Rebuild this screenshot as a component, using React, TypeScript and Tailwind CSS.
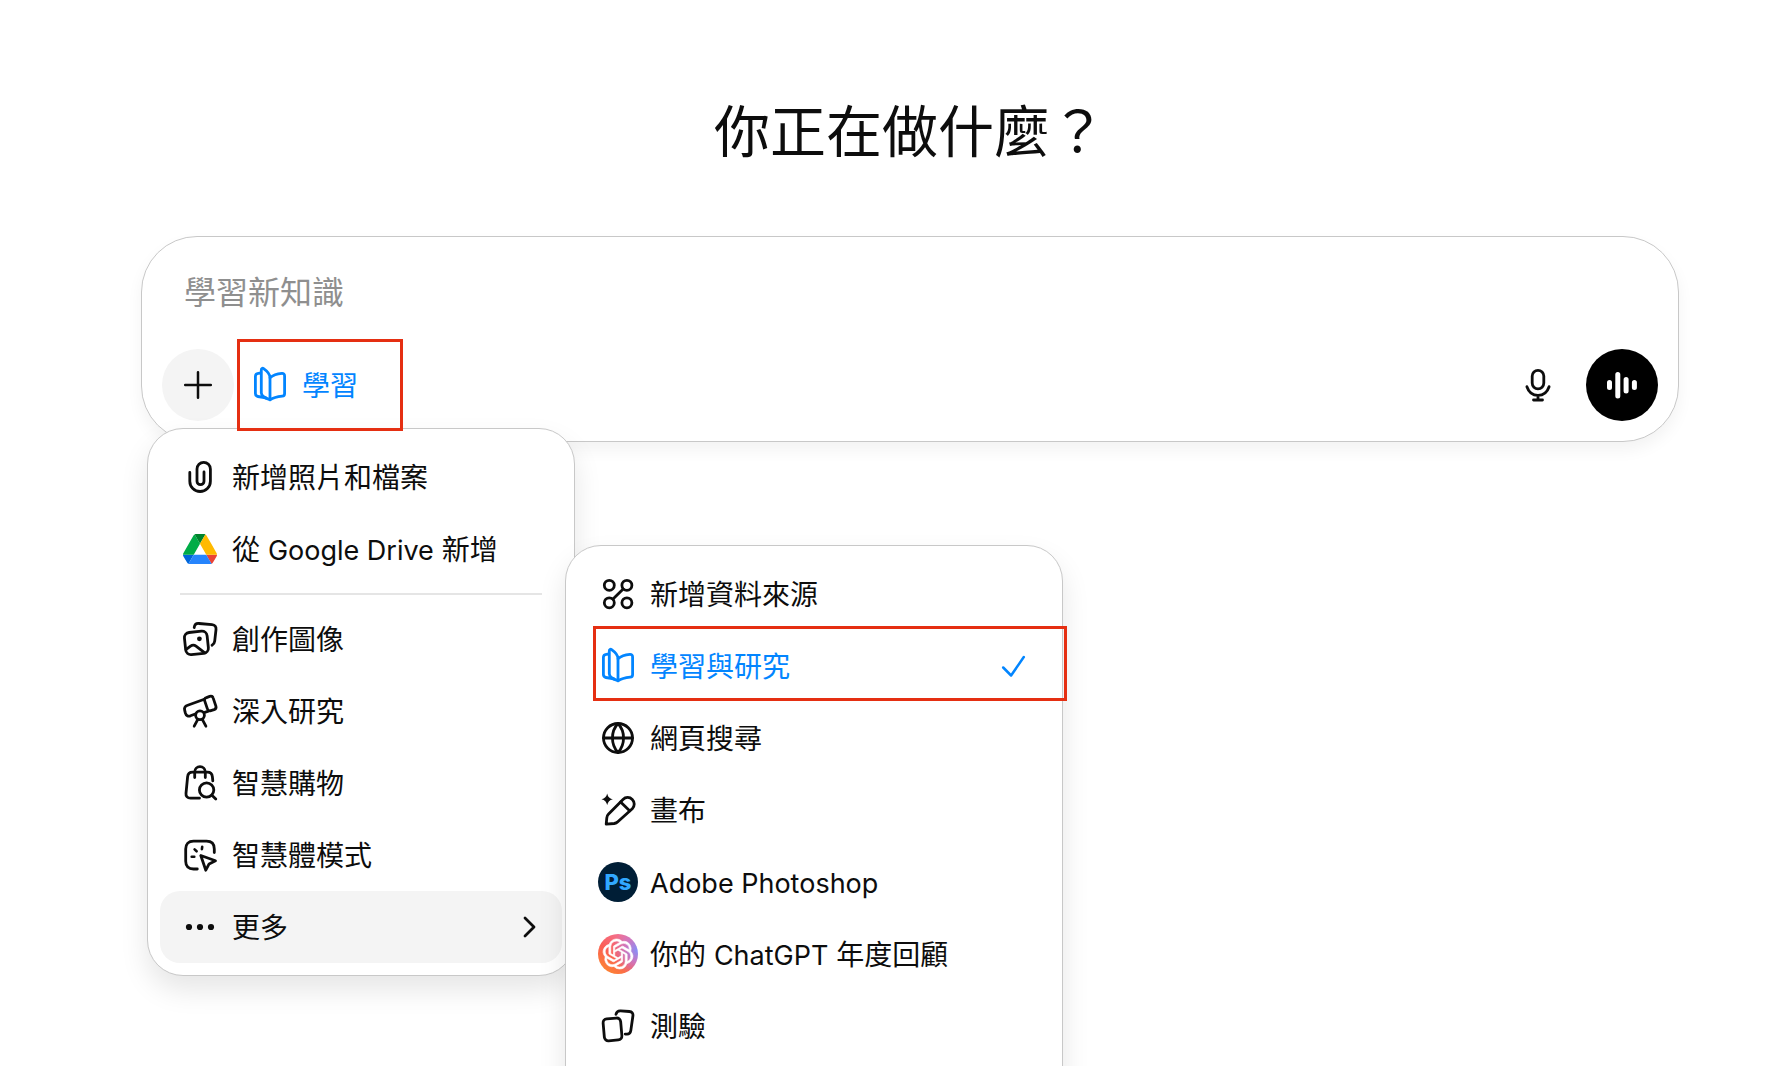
import React, { useState } from 'react';
import { SiOpenai } from 'react-icons/si';

interface IconProps {
  className?: string;
  children: React.ReactNode;
}

// All line icons share a 40px grid and the current text colour
const LineIcon: React.FC<IconProps> = ({ className = 'size-10', children }) => (
  <svg
    className={className}
    viewBox="0 0 40 40"
    fill="none"
    stroke="currentColor"
    strokeWidth="2.8"
    strokeLinecap="round"
    strokeLinejoin="round"
    aria-hidden="true"
  >
    {children}
  </svg>
);

const PlusIcon = () => (
  <LineIcon>
    <path strokeWidth="2.5" d="M20 7.2v25.6M7.2 20h25.6" />
  </LineIcon>
);

const BookIcon = () => (
  <LineIcon>
    <path d="M10.8 8 8.300 8.300c-1.900.2-2.900 1.200-2.900 3v17.300c0 1.600.9 2.600 2.500 2.900l8 1.400" />
    <path d="M20 34.800c-4.600-1.700-8.700-3-8.700-7V4.900c0-1.500 1.200-2.100 2.300-1.300C17 6 20 8.600 20 12.600z" />
    <path d="M20 12.800c3-2.600 6.600-3.900 11.900-4.400 1.700-.1 2.700.8 2.700 2.500v17.500c0 1.700-.8 2.600-2.400 2.800-5 .6-8.500 1.300-12.200 3.600" />
  </LineIcon>
);

const MicIcon = () => (
  <LineIcon>
    <rect x="14.2" y="5.300" width="11.600" height="18.600" rx="5.800" />
    <path d="M8.900 21.700c1.800 5.400 6.100 8.600 11.100 8.600s9.300-3.200 11.100-8.600M20 30.500V35M15.500 35h9" />
  </LineIcon>
);

const VoiceIcon = () => (
  <LineIcon>
    <path strokeWidth="5" d="M7.500 17.500v5M15.800 9.500V31M24.100 14.500v11.500M32.400 17.500v5" />
  </LineIcon>
);

const PaperclipIcon = () => (
  <LineIcon>
    <path d="M9.800 15.500V24.200a10.300 10.300 0 0 0 20.600 0V12a6.700 6.700 0 0 0-13.400 0v12.200a3.500 3.500 0 0 0 7 0V15" />
  </LineIcon>
);

const DriveIcon = () => (
  <svg className="w-[34px]" viewBox="0 0 87.3 78" aria-hidden="true">
    <path fill="#0066da" d="m6.6 66.85 3.85 6.65c.8 1.4 1.95 2.5 3.3 3.3L27.5 53H0c0 1.55.4 3.1 1.2 4.5z" />
    <path fill="#00ac47" d="M43.65 25 29.9 1.2c-1.35.8-2.5 1.9-3.3 3.3l-25.4 44A9.06 9.06 0 0 0 0 53h27.5z" />
    <path fill="#ea4335" d="M73.55 76.8c1.35-.8 2.5-1.9 3.3-3.3l1.6-2.75 7.65-13.25c.8-1.4 1.2-2.95 1.2-4.5H59.798l5.852 11.5z" />
    <path fill="#00832d" d="M43.65 25 57.4 1.2C56.05.4 54.5 0 52.9 0H34.4c-1.6 0-3.15.45-4.5 1.2z" />
    <path fill="#2684fc" d="M59.8 53H27.5L13.75 76.8c1.35.8 2.9 1.2 4.5 1.2h50.8c1.6 0 3.15-.45 4.5-1.2z" />
    <path fill="#ffba00" d="m73.4 26.5-12.7-22c-.8-1.4-1.95-2.5-3.3-3.3L43.65 25l16.15 28h27.45c0-1.55-.4-3.1-1.2-4.5z" />
  </svg>
);

const ImagesIcon = () => (
  <LineIcon>
    <rect x="5" y="12.8" width="22.8" height="22.2" rx="5.2" transform="rotate(-6 16.4 23.9)" />
    <circle cx="19.4" cy="19.8" r="2.4" fill="currentColor" stroke="none" />
    <path d="M6.2 30.300l4.300-3.200c1.800-1.300 3.800-1.300 5.500 0l8.800 6.700" />
    <path d="M14.2 8.500c.4-2.800 2-4.300 4.800-4l13 1.200c2.900.3 4.300 2.100 4 4.900l-1.300 11.500c-.2 1.900-1.100 3.300-2.700 4.100" />
  </LineIcon>
);

const TelescopeIcon = () => (
  <LineIcon>
    <path d="M24.300 8.300 7.700 14.200c-2.600.9-3.700 2.700-3 5.200l.7 2.800c.7 2.500 2.600 3.400 5.100 2.600l5.400-2" />
    <path d="M24.800 21.300l3.600-1.100" />
    <path d="m26.500 6.600 3.200-1.200c1.700-.6 3 0 3.500 1.700l2.700 8c.5 1.700-.1 2.900-1.800 3.500l-3.200 1c-1.700.6-2.900 0-3.500-1.700l-2.700-8c-.6-1.600 0-2.700 1.800-3.300z" />
    <circle cx="20" cy="24.300" r="4.400" />
    <path d="m17.700 28.600-3.500 6.600M22.400 28.600l3.500 6.600" />
  </LineIcon>
);

const ShoppingIcon = () => (
  <LineIcon>
    <path d="M19.500 35.200h-9c-3 0-4.800-1.900-4.500-4.900l1.600-16.500c.3-3 2-4.700 5-4.700h14.800c3 0 4.700 1.700 5 4.700l.4 4" />
    <path d="M14.700 14.500V9a5.300 5.300 0 0 1 10.600 0v5.500" />
    <circle cx="26.600" cy="27" r="7.200" />
    <path d="m31.900 32.200 3.900 3.900" />
  </LineIcon>
);

const AgentIcon = () => (
  <LineIcon>
    <path d="M17.300 34H13.500c-5 0-7.800-2.800-7.800-7.800V14c0-5 2.800-7.800 7.800-7.800h13c5 0 7.800 2.800 7.800 7.800v3.500" />
    <path d="m20.800 20.500 14.700 5.200-6.400 3.200-3.300 6.300z" />
    <path strokeWidth="2.600" d="m22.200 11.800-.3 2.400M14.600 14.400l2 1.900M11.700 21.700h2.600" />
  </LineIcon>
);

const MoreIcon = () => (
  <LineIcon>
    <g fill="currentColor" stroke="none">
      <circle cx="9" cy="20" r="3.100" />
      <circle cx="20" cy="20" r="3.100" />
      <circle cx="31" cy="20" r="3.100" />
    </g>
  </LineIcon>
);

const SourcesIcon = () => (
  <LineIcon>
    <circle cx="11.300" cy="11.300" r="5" />
    <circle cx="28.900" cy="11.300" r="5" />
    <circle cx="11.300" cy="28.800" r="5" />
    <circle cx="28.900" cy="28.800" r="5" />
    <path d="M15 25.100 25.200 15" />
  </LineIcon>
);

const GlobeIcon = () => (
  <LineIcon>
    <circle cx="20" cy="20" r="14.500" />
    <path d="M5.500 20h29M20 5.500c-7.400 8-7.400 21 0 29M20 5.500c7.400 8 7.400 21 0 29" />
  </LineIcon>
);

const CanvasIcon = () => (
  <LineIcon>
    <path
      fill="currentColor"
      stroke="none"
      d="M9.200 3.400c.8 3.500 2.200 4.900 5.700 5.800-3.500 1-4.900 2.500-5.700 5.800-.8-3.300-2.300-4.800-5.700-5.800 3.400-1 4.900-2.400 5.700-5.800z"
    />
    <path d="m8.200 34.100.6-6.300c.1-1.500.7-2.700 1.800-3.800L25 9.400a6.500 6.500 0 0 1 9.300 9.300L19.800 31.800c-1 1-2.200 1.500-3.600 1.700z" />
    <path d="m22.600 11.900 9 8.800" />
  </LineIcon>
);

const QuizIcon = () => (
  <LineIcon>
    <rect x="5.700" y="12.400" width="17.600" height="22" rx="4" transform="rotate(-5 14.500 23.400)" />
    <path d="M18 8.300c.6-2.600 2-3.700 4.600-3.500l8.700.7c2.700.2 4 1.800 3.600 4.500l-2.100 14.600c-.4 2.500-1.600 3.600-4 3.500h-1.600" />
  </LineIcon>
);

const PhotoshopIcon = () => (
  <span
    className="flex size-10 items-center justify-center rounded-full bg-[#001e36] font-['Inter'] text-[22px] leading-none font-extrabold text-[#31a8ff]"
    aria-hidden="true"
  >
    Ps
  </span>
);

const ReviewIcon = () => (
  <span className="flex size-10 items-center justify-center rounded-full bg-[radial-gradient(circle_at_100%_40%,#8390fa_0%,#c678cdcc_28%,transparent_55%),linear-gradient(35deg,#fd8a2c_5%,#fb5f55_45%,#f3708f_80%)] text-white">
    <SiOpenai className="size-[30px] overflow-visible" stroke="currentColor" strokeWidth="0.5" aria-hidden="true" />
  </span>
);

const CheckIcon = () => (
  <svg className="size-8" viewBox="0 0 32 32" fill="none" stroke="currentColor" strokeWidth="2.5" strokeLinecap="round" strokeLinejoin="round" aria-hidden="true">
    <path d="m5.200 17.500 7.900 8L25.800 7" />
  </svg>
);

const ChevronIcon = () => (
  <svg className="size-7" viewBox="0 0 28 28" fill="none" stroke="currentColor" strokeWidth="2.8" strokeLinecap="round" strokeLinejoin="round" aria-hidden="true">
    <path d="m11 5 9 9-9 9" />
  </svg>
);

interface MenuItemProps {
  icon: React.ReactNode;
  label: React.ReactNode;
  className?: string;
  trailing?: React.ReactNode;
  onClick?: () => void;
}

const MenuItem: React.FC<MenuItemProps> = ({ icon, label, className = '', trailing, onClick }) => (
  <button
    type="button"
    role="menuitem"
    onClick={onClick}
    className={`relative flex h-[72px] w-full items-center gap-3 rounded-[20px] px-5 text-left ${className}`}
  >
    <span className="flex size-10 shrink-0 items-center justify-center">{icon}</span>
    <span className="flex-1 pt-0.5 whitespace-nowrap">{label}</span>
    {trailing}
  </button>
);

// Latin names run a touch smaller so they sit evenly beside the Han characters
const Latin: React.FC<{ children: React.ReactNode }> = ({ children }) => (
  <span className="text-[27px]">{children}</span>
);

const menuClass =
  'absolute rounded-[36px] border border-[#c8c8c8] bg-white p-3 text-[28px] leading-10 shadow-[0_14px_28px_rgba(0,0,0,0.10)]';

export default function App() {
  const [prompt, setPrompt] = useState('');
  const [moreOpen, setMoreOpen] = useState(true);

  return (
    <main className="h-screen overflow-hidden bg-white pt-24 pr-[103px] pl-[141px] font-['Inter','Noto_Sans_CJK_TC',sans-serif] text-[#0d0d0d]">
      <h1 className="text-center text-[56px] leading-[72px]">你正在做什麼？</h1>

      <div className="relative mt-[68px]">
        <form
          onSubmit={(e) => e.preventDefault()}
          className="flex flex-col gap-5 rounded-[56px] border border-[#c8c8c8] bg-white p-5 shadow-[0_8px_16px_rgba(0,0,0,0.05)]"
        >
          <input
            type="text"
            value={prompt}
            onChange={(e) => setPrompt(e.target.value)}
            placeholder="學習新知識"
            aria-label="學習新知識"
            className="h-[72px] w-full px-[22px] pb-0.5 text-[32px] outline-none placeholder:text-[#8f8f8f]"
          />
          <div className="flex items-center">
            <button type="button" aria-label="新增" className="flex size-[72px] items-center justify-center rounded-full bg-[#f4f4f4]">
              <PlusIcon />
            </button>
            <button type="button" className="relative flex h-[72px] items-center gap-3 px-4 text-[28px] text-[#0285ff]">
              <BookIcon />
              <span className="pt-0.5">學習</span>
              <span className="absolute -top-[10px] left-[3px] z-10 h-[92px] w-[166px] border-3 border-[#e52f12]" />
            </button>
            <button type="button" aria-label="聽寫" className="ml-auto flex size-[72px] items-center justify-center rounded-full">
              <MicIcon />
            </button>
            <button type="button" aria-label="語音" className="ml-3 flex size-[72px] items-center justify-center rounded-full bg-black text-white">
              <VoiceIcon />
            </button>
          </div>
        </form>

        <div role="menu" className={`${menuClass} top-[192px] left-[6px] w-[428px]`}>
          <MenuItem icon={<PaperclipIcon />} label="新增照片和檔案" />
          <MenuItem icon={<DriveIcon />} label={<>從 <Latin>Google Drive</Latin> 新增</>} />
          <hr className="mx-5 my-2 border-t-2 border-[#e5e5e5]" />
          <MenuItem icon={<ImagesIcon />} label="創作圖像" />
          <MenuItem icon={<TelescopeIcon />} label="深入研究" />
          <MenuItem icon={<ShoppingIcon />} label="智慧購物" />
          <MenuItem icon={<AgentIcon />} label="智慧體模式" />
          <MenuItem
            icon={<MoreIcon />}
            label="更多"
            className="bg-[#f4f4f4]"
            trailing={<ChevronIcon />}
            onClick={() => setMoreOpen(!moreOpen)}
          />
        </div>

        {moreOpen && (
          <div role="menu" className={`${menuClass} top-[309px] left-[424px] w-[498px] pb-20`}>
            <MenuItem icon={<SourcesIcon />} label="新增資料來源" />
            <MenuItem
              icon={<BookIcon />}
              label="學習與研究"
              className="text-[#0285ff]"
              trailing={
                <>
                  <CheckIcon />
                  <span className="absolute -top-1 -right-[17px] left-[15px] h-[75px] border-3 border-[#e52f12]" />
                </>
              }
            />
            <MenuItem icon={<GlobeIcon />} label="網頁搜尋" />
            <MenuItem icon={<CanvasIcon />} label="畫布" />
            <MenuItem icon={<PhotoshopIcon />} label={<Latin>Adobe Photoshop</Latin>} />
            <MenuItem icon={<ReviewIcon />} label={<>你的 <Latin>ChatGPT</Latin> 年度回顧</>} />
            <MenuItem icon={<QuizIcon />} label="測驗" />
          </div>
        )}
      </div>
    </main>
  );
}
